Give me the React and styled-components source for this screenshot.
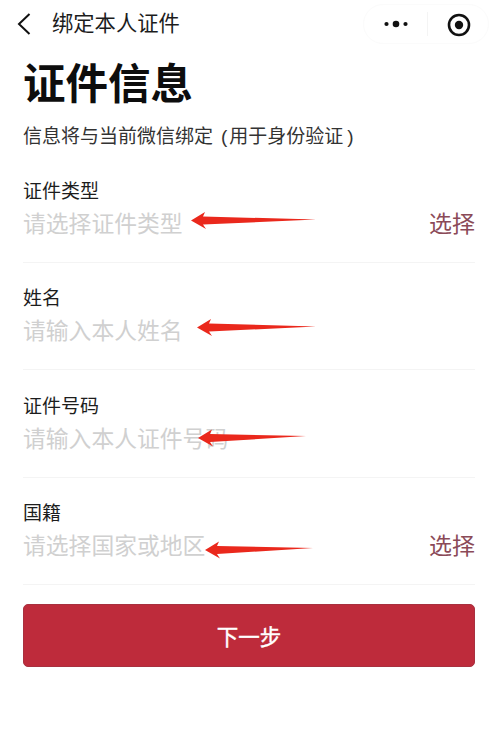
import React from 'react';
import styled, {createGlobalStyle} from 'styled-components';

const fields = [
    {label: '证件类型', placeholder: '请选择证件类型', select: true, arrow: {left: 190, top: 33, width: 126, tilt: -1}},
    {label: '姓名', placeholder: '请输入本人姓名', arrow: {left: 196, top: 33, width: 120, tilt: -1}},
    {label: '证件号码', placeholder: '请输入本人证件号码', arrow: {left: 197, top: 35, width: 109, tilt: -2}},
    {label: '国籍', placeholder: '请选择国家或地区', select: true, arrow: {left: 204, top: 40, width: 109, tilt: -2}},
];

const RedArrow = ({left, top, width, tilt}) => (
    <Arrow $left={left} $top={top} width={width} height={20} viewBox={`0 0 ${width} 20`}>
        <path
            d={`M1 ${10 - tilt / 2} L15 ${1.5 - tilt / 2} L13 ${6 - tilt / 2} L${width} ${10 + tilt / 2} L13 ${14 - tilt / 2} L16 ${18.5 - tilt / 2} Z`}
            fill="#ea281c"
        />
    </Arrow>
);

const App = () => {

    return (
        <Container>
            <GlobalStyle/>
            <Nav>
                <BackIcon width="14" height="24" viewBox="0 0 14 24">
                    <path d="M12.5 2 L2 12 L12.5 22" fill="none" stroke="#111" strokeWidth="2"/>
                </BackIcon>
                <NavTitle>绑定本人证件</NavTitle>
                <Capsule>
                    <svg width="24" height="10" viewBox="0 0 24 10">
                        <circle cx="2.5" cy="5" r="2.1" fill="#111"/>
                        <circle cx="12" cy="5" r="3.3" fill="#111"/>
                        <circle cx="21.5" cy="5" r="2.1" fill="#111"/>
                    </svg>
                    <CapsuleLine/>
                    <svg width="24" height="25" viewBox="0 0 24 25">
                        <circle cx="12" cy="13" r="10" fill="none" stroke="#111" strokeWidth="2.6"/>
                        <circle cx="12" cy="13" r="4.2" fill="#111"/>
                    </svg>
                </Capsule>
            </Nav>
            <Title>证件信息</Title>
            <Subtitle>信息将与当前微信绑定<Paren $side="left">(</Paren>用于身份验证<Paren $side="right">)</Paren></Subtitle>
            <Form>
                {fields.map(field => (
                    <Field key={field.label}>
                        <Label>{field.label}</Label>
                        <InputRow>
                            <Placeholder>{field.placeholder}</Placeholder>
                            {field.select && <Select>选择</Select>}
                        </InputRow>
                        <RedArrow {...field.arrow}/>
                    </Field>
                ))}
            </Form>
            <NextButton>下一步</NextButton>
        </Container>
    )
}

const GlobalStyle = createGlobalStyle`
  html, body {
    margin: 0;
    background: #fff;
  }

  body {
    font-family: "Liberation Sans", "Noto Sans CJK SC", sans-serif;
  }
`;

const Container = styled.div`
  width: 500px;
  height: 747px;
  overflow: hidden;
  padding: 0 25px 0 23px;
  box-sizing: border-box;
`;

const Nav = styled.header`
  height: 48px;
  margin: 0 -14px 0 -6px;
  display: flex;
  align-items: center;
`;

const BackIcon = styled.svg`
  margin-right: 21px;
  flex-shrink: 0;
`;

const NavTitle = styled.div`
  font-size: 21.3px;
  line-height: 48px;
  color: #1c1c1c;
  flex: 1;
`;

const Capsule = styled.div`
  width: 126px;
  height: 40px;
  box-sizing: border-box;
  padding: 0 17px 0 20px;
  border: 1px solid #fbfbfb;
  border-radius: 20px;
  display: flex;
  align-items: center;
  justify-content: space-between;
`;

const CapsuleLine = styled.span`
  width: 1px;
  height: 24px;
  background: #f4f4f4;
`;

const Title = styled.h1`
  margin: 9px 0 0;
  font-size: 42.5px;
  font-weight: 700;
  line-height: 56px;
  color: #0d0d0d;
`;

const Subtitle = styled.p`
  margin: 10px 0 0;
  font-size: 19px;
  line-height: 28px;
  color: #333;
`;

const Paren = styled.span`
  margin: ${props => props.$side === 'left' ? '0 2px 0 8px' : '0 0 0 4px'};
`;

const Form = styled.div`
  margin-top: 26px;
  display: flex;
  flex-direction: column;
  gap: 21.4px;
`;

const Field = styled.div`
  position: relative;
  height: 86px;
  box-sizing: border-box;
  border-bottom: 1px solid #f4f4f4;
`;

const Label = styled.div`
  font-size: 19px;
  line-height: 30px;
  color: #1d1d1d;
`;

const InputRow = styled.div`
  display: flex;
  justify-content: space-between;
  align-items: center;
`;

const Placeholder = styled.span`
  font-size: 22.8px;
  line-height: 34px;
  color: #d0d0d0;
  white-space: nowrap;
`;

const Select = styled.span`
  font-size: 23px;
  line-height: 34px;
  color: #8b4a58;
`;

const Arrow = styled.svg`
  position: absolute;
  left: ${props => props.$left - 23}px;
  top: ${props => props.$top}px;
`;

const NextButton = styled.button`
  display: block;
  width: 452px;
  height: 63px;
  margin-top: 19px;
  padding: 0;
  border: 1px solid #a8303f;
  border-radius: 5px;
  background: #be2b3b;
  color: #fff;
  font-family: inherit;
  font-size: 21.5px;
  font-weight: 400;
  -webkit-text-stroke: 0.4px #fff;
`;

export default App;
